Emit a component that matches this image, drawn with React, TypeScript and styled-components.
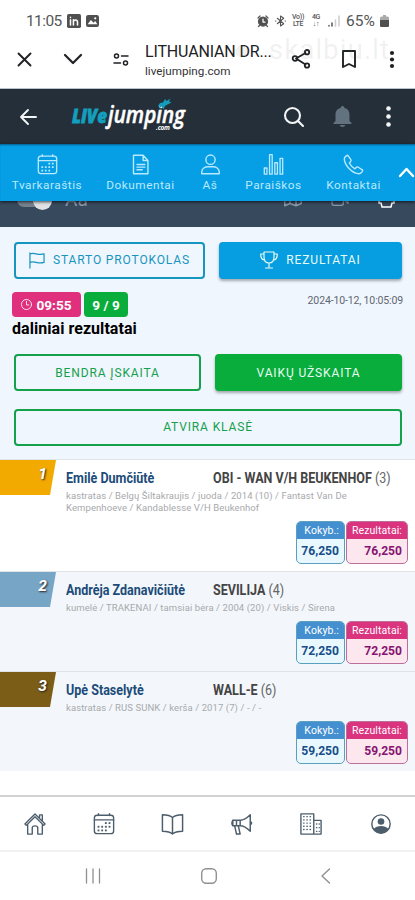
import React from 'react';
import styled, { createGlobalStyle } from 'styled-components';

const Global = createGlobalStyle`
  * { box-sizing: border-box; }
  body { margin: 0; background: #fff; font-family: Roboto, "Liberation Sans", sans-serif; }
  svg { display: block; flex: none; overflow: visible; }
`;

const Screen = styled.div`
  width: 415px;
  height: 900px;
  overflow: hidden;
  display: flex;
  flex-direction: column;
  background: #fff;
`;

const Squeeze = styled.span`
  display: inline-block;
  white-space: nowrap;
  transform: scaleX(0.808);
  transform-origin: left center;
`;

/* phone status bar */
const StatusBar = styled.div`
  height: 40px;
  flex: none;
  display: flex;
  align-items: center;
  padding: 1px 26px 0 26px;
  color: #555;
`;
const Clock = styled.div`
  width: 41px;
  font-size: 15.5px;
  letter-spacing: -0.6px;
`;
const StatusIcons = styled.div`
  display: flex;
  gap: 5px;
  flex: 1;
`;
const SignalGroup = styled.div`
  display: flex;
  align-items: center;
  gap: 6px;
`;
const TinyStack = styled.div`
  font-size: 7px;
  line-height: 7px;
  font-weight: 500;
  text-align: center;
  letter-spacing: -0.3px;
  width: 12px;
`;
const Percent = styled.div`
  font-size: 15.5px;
  width: 31px;
  letter-spacing: 0;
  margin-right: -3px;
`;

/* in-app browser bar */
const BrowserBar = styled.div`
  height: 49px;
  flex: none;
  position: relative;
  display: flex;
  align-items: center;
  padding: 0 20px 10px 17px;
  color: #202124;
  border-bottom: 1px solid #b9c3cd;
`;
const BarSlot = styled.div<{ $w: number }>`
  width: ${(p) => p.$w}px;
  flex: none;
`;
const PageInfo = styled.div`
  width: 146px;
  height: 39px;
  flex: none;
  white-space: nowrap;
`;
const PageTitle = styled.div`
  font-size: 16px;
  line-height: 19px;
  margin-top: 2px;
  letter-spacing: -0.15px;
`;
const PageHost = styled.div`
  font-size: 11.7px;
  line-height: 16px;
  margin-top: 2px;
  color: #333;
`;
const Watermark = styled.div`
  position: absolute;
  left: 233px;
  top: -8px;
  display: flex;
  gap: 18px;
  font-size: 28px;
  line-height: 36px;
  letter-spacing: 0.9px;
  color: rgba(110, 110, 110, 0.1);
  white-space: nowrap;
`;

/* site header */
const Header = styled.header`
  height: 55px;
  flex: none;
  display: flex;
  align-items: center;
  padding: 0 23px 0 20px;
  background: #242f39;
  color: #f3f5f7;
`;
const LogoBox = styled.div`
  margin-left: 35px;
  width: 212px;
`;
const HeaderActions = styled.div`
  display: flex;
  align-items: center;
`;

const MenuBar = styled.nav`
  height: 57px;
  flex: none;
  display: flex;
  position: relative;
  z-index: 1;
  background: #069ee5;
  color: #b9eaff;
  box-shadow: 0 1px 3px rgba(0, 0, 0, 0.7), inset 0 2px 2px -1px rgba(0, 40, 70, 0.55);
`;
const MenuItem = styled.div<{ $w: number }>`
  width: ${(p) => p.$w}px;
  flex: none;
  display: flex;
  flex-direction: column;
  align-items: center;
  padding-top: 10px;
  font-size: 11.8px;
  letter-spacing: 0.52px;
  line-height: 15px;
  gap: 3px;
  white-space: nowrap;
`;
const MenuToggle = styled.div`
  padding: 21px 0 0 2px;
  color: #fff;
`;

const ToolStrip = styled.div`
  height: 26px;
  flex: none;
  display: flex;
  overflow: hidden;
  background: #37495d;
  color: #8b98a5;
  padding: 0 20px 0 17px;
`;
const Switch = styled.div`
  width: 35px;
  height: 14px;
  margin-top: -8px;
  border-radius: 7px;
  background: #76828d;
  display: flex;
  justify-content: flex-end;
  align-items: center;
`;
const Knob = styled.div`
  width: 19px;
  height: 19px;
  flex: none;
  border-radius: 50%;
  background: #dfe3e6;
`;
const FontSizeLabel = styled.div`
  font-size: 19px;
  line-height: 20px;
  margin: -11px 0 0 13px;
  flex: 1;
`;
const StripIcons = styled.div`
  display: flex;
  gap: 28px;
  margin-top: -11px;
`;

/* filter panel */
const Panel = styled.section`
  height: 232px;
  flex: none;
  background: #f0f6fe;
  padding: 14.500px 13px 0 14px;
  display: flex;
  flex-direction: column;
`;
const ButtonRow = styled.div`
  display: flex;
  gap: 14px;
  & + & {
    margin-top: 17.500px;
  }
`;
const Button = styled.button<{ $tone: string; $solid?: boolean; $w: number }>`
  width: ${(p) => p.$w}px;
  height: 37px;
  padding: 0;
  display: flex;
  align-items: center;
  justify-content: center;
  gap: 8px;
  border: 2px solid ${(p) => p.$tone};
  border-radius: 4px;
  background: ${(p) => (p.$solid ? p.$tone : 'transparent')};
  color: ${(p) => (p.$solid ? '#e7fbf3' : p.$tone)};
  box-shadow: ${(p) => (p.$solid ? '0 2px 3px rgba(0,0,0,.32)' : 'none')};
  font-family: inherit;
  font-size: 12px;
  letter-spacing: 0.87px;
  white-space: nowrap;
`;
const InfoRow = styled.div`
  display: flex;
  align-items: flex-start;
  gap: 3px;
  margin: 13.500px -1px 0 -2px;
`;
const Badge = styled.div<{ $bg: string; $w: number }>`
  width: ${(p) => p.$w}px;
  height: 25px;
  border-radius: 4px;
  background: ${(p) => p.$bg};
  color: #fff;
  display: flex;
  align-items: center;
  justify-content: center;
  gap: 4px;
  font-size: 13.6px;
  font-weight: 700;
`;
const Stamp = styled.div`
  margin-left: auto;
  padding-top: 2px;
  font-size: 10.5px;
  line-height: 14px;
  letter-spacing: -0.14px;
  color: #5f6670;
`;
const Subtitle = styled.h2`
  margin: 2px 0 15px -2px;
  height: 20px;
  font-size: 16px;
  line-height: 20px;
  font-weight: 700;
  letter-spacing: 0.05px;
  color: #000;
`;

/* results */
const Row = styled.article<{ $h: number; $bg: string }>`
  height: ${(p) => p.$h}px;
  flex: none;
  display: flex;
  background: ${(p) => p.$bg};
  border-top: 1px solid #dfe4e9;
`;
const Place = styled.div<{ $bg: string }>`
  width: 56px;
  height: 35px;
  flex: none;
  clip-path: polygon(0 0, 100% 0, 50px 100%, 0 100%);
  background: ${(p) => p.$bg};
  color: #fff;
  font-size: 15.5px;
  line-height: 18px;
  font-style: italic;
  font-weight: 700;
  text-align: right;
  padding: 5px 9px 0 0;
  text-shadow: 1px 1px 2px #222;
`;
const Entry = styled.div`
  flex: 1;
  min-width: 0;
  padding: 9px 7px 7px 10px;
  display: flex;
  flex-direction: column;
`;
const Names = styled.div`
  display: grid;
  grid-template-columns: 147px 1fr;
  font-size: 15.5px;
  line-height: 18px;
  height: 18px;
`;
const Rider = styled.div`
  color: #204b78;
  font-weight: 700;
`;
const Horse = styled.div`
  color: #444;
  font-weight: 700;
`;
const StartNo = styled.span`
  font-weight: 400;
  color: #666;
`;
const Details = styled.div`
  margin-top: 3px;
  font-size: 9.500px;
  line-height: 12px;
  letter-spacing: 0.090px;
  color: #a7a9ac;
  white-space: nowrap;
`;
const Scores = styled.div`
  display: flex;
  justify-content: flex-end;
  gap: 1px;
  margin-top: auto;
`;
const Score = styled.div<{ $w: number; $head: string; $body: string; $ink: string; $line: string }>`
  width: ${(p) => p.$w}px;
  height: 43px;
  flex: none;
  overflow: hidden;
  border: 1px solid ${(p) => p.$line};
  border-radius: 5px;
  background: ${(p) => p.$body};
  color: ${(p) => p.$ink};
  text-align: right;
  font-size: 12.1px;
  font-weight: 700;
  line-height: 24px;
  padding-right: 5px;
`;
const ScoreLabel = styled.div<{ $bg: string }>`
  margin-right: -5px;
  padding-right: 5px;
  height: 17px;
  background: ${(p) => p.$bg};
  color: #fff;
  font-size: 10.5px;
  line-height: 17px;
  font-weight: 400;
  letter-spacing: 0.1px;
`;

const Spacer = styled.div`
  flex: 1;
`;
const TabBar = styled.nav`
  height: 57px;
  flex: none;
  display: grid;
  grid-template-columns: repeat(6, 69.2px);
  align-items: center;
  justify-items: center;
  border-top: 2px solid #cfd1d3;
  border-bottom: 2px solid #f0f1f2;
  color: #4c5d6c;
`;
const SystemBar = styled.div`
  height: 48px;
  flex: none;
  display: flex;
  align-items: center;
  color: #909090;
  padding-left: 85px;
`;
const SystemSlot = styled.div<{ $w: number }>`
  width: ${(p) => p.$w}px;
`;

type IconProps = { w: number; h?: number; box?: string; sw?: number; children: React.ReactNode };
const Icon = ({ w, h = w, box = '0 0 24 24', sw = 1.5, children }: IconProps) => (
  <svg width={w} height={h} viewBox={box} fill="none" stroke="currentColor" strokeWidth={sw} strokeLinecap="round" strokeLinejoin="round">
    {children}
  </svg>
);

const dots = [[14, 11], [18, 11], [6, 15], [10, 15], [14, 15], [18, 15], [6, 19], [10, 19], [14, 19]];
const Calendar = ({ w }: { w: number }) => (
  <Icon w={w} sw={1.5}>
    <rect x="1.5" y="2.5" width="21" height="20" rx="3" />
    <path d="M1.5 7.5h21M6 .8v2M18 .8v2" />
    {dots.map(([x, y]) => <rect key={`${x}-${y}`} x={x - 1} y={y - 1} width="2" height="2" fill="currentColor" stroke="none" />)}
  </Icon>
);

const Logo = () => (
  <svg width="116" height="38" viewBox="0 0 116 38" fontFamily="'Open Sans', sans-serif" fontStyle="italic">
    <text x="0" y="25" fontSize="20" fontWeight="800" fill="#139fbe" stroke="#139fbe" strokeWidth=".8" textLength="35" lengthAdjust="spacingAndGlyphs">LIVe</text>
    <text x="36" y="25" fontSize="23.500" fontWeight="600" fill="#fff" stroke="#fff" strokeWidth=".5" textLength="77" lengthAdjust="spacingAndGlyphs">jumping</text>
    <text x="84" y="32" fontSize="6.500" fontWeight="700" fill="#fff" textLength="14">.com</text>
    <path d="M85.500 8.500 88 5l3-.5 2-3.500 1.500 2L98.500.500 97 3.500l2.500 1-4 2-2.500 1.500-1.500 3.500-1.500-3L87 10.500l1-3z" fill="#159cba" />
  </svg>
);

const menu = [
  { w: 94, label: 'Tvarkaraštis', icon: <Calendar w={21} /> },
  { w: 93, label: 'Dokumentai', icon: <Icon w={21} sw={1.6}><path d="M4 1.5h11l5.5 6v15H4zM15 1.5v6h5.5M8 12h9M8 15h9M8 18h6" /></Icon> },
  { w: 46, label: 'Aš', icon: <Icon w={21} sw={1.6}><circle cx="12" cy="6.5" r="5.3" /><path d="M2 22.5v-2c0-4 4-6 7-6h6c3 0 7 2 7 6v2z" /></Icon> },
  { w: 81, label: 'Paraiškos', icon: <Icon w={21} sw={1.5}><path d="M1.5 16h3v7h-3zM7.5 .8h3V23h-3zM13.5 10h3v13h-3zM19.5 5h3v18h-3z" /></Icon> },
  { w: 79, label: 'Kontaktai', icon: <Icon w={21} sw={1.6}><path d="M5.5 1.5 9 6.5c.5 1 .3 1.7-.4 2.4L7.2 10.3c1.6 3 3.5 5 6.5 6.6l1.4-1.4c.7-.7 1.5-.8 2.4-.4l5 3.4c.3 1-2 4-4 4C11 22.5 1.5 13 1.5 5.5c0-2 3-4 4-4z" /></Icon> },
];

const results = [
  { place: 1, h: 112, bg: '#ffffff', tag: '#f2a900', rider: 'Emilė Dumčiūtė', horse: 'OBI - WAN V/H BEUKENHOF', no: 3, score: '76,250', details: ['kastratas / Belgų Šiltakraujis / juoda / 2014 (10) / Fantast Van De', 'Kempenhoeve / Kandablesse V/H Beukenhof'] },
  { place: 2, h: 100, bg: '#f3f7fb', tag: '#77a5c5', rider: 'Andrėja Zdanavičiūtė', horse: 'SEVILIJA', no: 4, score: '72,250', details: ['kumelė / TRAKENAI / tamsiai bėra / 2004 (20) / Viskis / Sirena'] },
  { place: 3, h: 100, bg: '#f3f7fb', tag: '#7b5d17', rider: 'Upė Staselytė', horse: 'WALL-E', no: 6, score: '59,250', details: ['kastratas / RUS SUNK / kerša / 2017 (7) / - / -'] },
];

const windows = [5, 8.5, 12].flatMap((x) => [4, 7.5, 11, 14.5, 18].map((y) => [x, y]));

export default function App() {
  return (
    <Screen>
      <Global />
      <StatusBar>
        <Clock>11:05</Clock>
        <StatusIcons>
          <Icon w={14}><rect width="24" height="24" rx="3" fill="#505050" stroke="none" /><path d="M6 10v9M11 10v9M11 14c0-5 7-5 7 0v5M6 5.5v.5" stroke="#fff" strokeWidth="2.6" /></Icon>
          <Icon w={13} h={14}><rect y="1" width="24" height="22" rx="4" fill="#505050" stroke="none" /><path d="m3 18 6-8 5 5 3-3 4 6z" fill="#fff" stroke="none" /><circle cx="17" cy="7" r="2" fill="#fff" stroke="none" /></Icon>
        </StatusIcons>
        <SignalGroup>
          <Icon w={12} sw={2.5}><circle cx="12" cy="13" r="9" fill="#505050" /><path d="M2 6 6 2M22 6l-4-4M5 21l-2 2M19 21l2 2" /><path d="M12 8v6h4" stroke="#fff" /></Icon>
          <Icon w={11} h={14} sw={2.4}><path d="m5 6 14 12-7 5V1l7 5L5 18M1 12h1M22 12h1" /></Icon>
          <TinyStack>Vo)) LTE</TinyStack>
          <TinyStack>4G<br />↓↑</TinyStack>
          <Icon w={12} h={12} box="0 0 12 12" sw={1.5}><path d="M1 10.5v.5M4 8v3" /><path d="M7.5 5v6M11 1v10" stroke="#ccc" /></Icon>
          <Percent>65%</Percent>
          <Icon w={9} h={12} box="0 0 9 12"><rect x="3" width="3" height="3" fill="#aaa" stroke="none" /><rect y="1.5" width="9" height="10.5" rx="1.5" fill="#aaa" stroke="none" /><path d="M0 5h9v5.5q0 1.5-1.5 1.5h-6Q0 12 0 10.5z" fill="#505050" stroke="none" /></Icon>
        </SignalGroup>
      </StatusBar>

      <BrowserBar>
        <Watermark><span>●</span><span>skalbiu.lt</span></Watermark>
        <BarSlot $w={47}><Icon w={15} box="0 0 15 15" sw={1.9}><path d="m1.5 1.5 12 12M13.5 1.5l-12 12" /></Icon></BarSlot>
        <BarSlot $w={49}><Icon w={18} h={10} box="0 0 18 10" sw={2.2}><path d="m1 1 8 8 8-8" /></Icon></BarSlot>
        <BarSlot $w={32}><Icon w={16} h={13} box="0 0 16 13" sw={1.5}><circle cx="3.5" cy="3" r="2" /><path d="M8.5 3H15M1 10h6.5" /><circle cx="12.5" cy="10" r="2" /></Icon></BarSlot>
        <PageInfo>
          <PageTitle>LITHUANIAN DR...</PageTitle>
          <PageHost>livejumping.com</PageHost>
        </PageInfo>
        <BarSlot $w={51}><Icon w={20} h={20} box="0 0 20 20" sw={1.8}><path d="M14.5 4 5 9.5l9.5 6" /><circle cx="4" cy="9.5" r="2.3" /><circle cx="16" cy="3.2" r="2.2" /><circle cx="16" cy="16.5" r="2.2" /></Icon></BarSlot>
        <BarSlot $w={48}><Icon w={14} h={18} box="0 0 14 18" sw={1.9}><path d="M1 1h12v16l-6-3-6 3z" /></Icon></BarSlot>
        <Icon w={4} h={17} box="0 0 4 17"><g fill="currentColor" stroke="none"><circle cx="2" cy="2" r="2.1" /><circle cx="2" cy="8.5" r="2.1" /><circle cx="2" cy="15" r="2.1" /></g></Icon>
      </BrowserBar>

      <Header>
        <Icon w={17} h={16} box="0 0 17 16" sw={1.9}><path d="M16 8H1M8 1 1 8l7 7" /></Icon>
        <LogoBox><Logo /></LogoBox>
        <HeaderActions>
          <BarSlot $w={49}><Icon w={20} h={20} box="0 0 20 20" sw={2.1}><circle cx="8.5" cy="8.5" r="7.5" /><path d="m14 14 5 5" /></Icon></BarSlot>
          <BarSlot $w={53}><Icon w={19} h={21} box="0 0 19 21"><path d="M9.5 0q2 0 2 2c4 1 5 4 5 7v6l2 2v1H.5v-1l2-2V9c0-3 1-6 5-7q0-2 2-2zM6.5 19h6q-1 2-3 2t-3-2z" fill="#63727f" stroke="none" /></Icon></BarSlot>
          <Icon w={5} h={21} box="0 0 5 21"><g fill="currentColor" stroke="none"><circle cx="2.5" cy="2.5" r="2.3" /><circle cx="2.5" cy="10.5" r="2.3" /><circle cx="2.5" cy="18.5" r="2.3" /></g></Icon>
        </HeaderActions>
      </Header>

      <MenuBar>
        {menu.map((m) => <MenuItem key={m.label} $w={m.w}>{m.icon}{m.label}</MenuItem>)}
        <MenuToggle><Icon w={22} h={14} box="-4 -2 22 14" sw={2.4}><path d="m1 9 6.5-7L14 9" /></Icon></MenuToggle>
      </MenuBar>

      <ToolStrip>
        <Switch><Knob /></Switch>
        <FontSizeLabel>Aa</FontSizeLabel>
        <StripIcons>
          <Icon w={18} sw={2}><path d="M1 4v17l7-3 8 3 7-3V1l-7 3-8-3zM8 1v17M16 4v17" /></Icon>
          <Icon w={20} h={16} sw={2}><rect x="0" y="3" width="17" height="20" rx="3" /><path d="m17 14 7 6V8" /></Icon>
          <svg width="17" height="17" viewBox="0 0 17 17" fill="none" stroke="#fff" strokeWidth="1.5"><path d="M1 8v5h2l1 4h9l1-4h2V8z" /></svg>
        </StripIcons>
      </ToolStrip>

      <Panel>
        <ButtonRow>
          <Button $tone="#1695be" $w={191}>
            <Icon w={16} h={17} box="0 0 17 18" sw={1.3}><path d="M1 1v16M1 2c5-2 8 2 15 0v9c-7 2-10-2-15 0" /></Icon>STARTO PROTOKOLAS
          </Button>
          <Button $tone="#069de1" $solid $w={183}>
            <Icon w={18} h={18} box="0 0 18 18" sw={1.2}><path d="M4 1h10v5c0 4-2 6-5 6S4 10 4 6zM4 3H.7c0 4 1 6 4 6M14 3h3.3c0 4-1 6-4 6M9 12v4M5.5 17h7" /></Icon>REZULTATAI
          </Button>
        </ButtonRow>
        <InfoRow>
          <Badge $bg="#e02f7c" $w={69}><Icon w={11} sw={1.8}><circle cx="12" cy="12" r="11" /><path d="M12 5v8h5" /></Icon>09:55</Badge>
          <Badge $bg="#08ad3b" $w={44}>9 / 9</Badge>
          <Stamp>2024-10-12, 10:05:09</Stamp>
        </InfoRow>
        <Subtitle>daliniai rezultatai</Subtitle>
        <ButtonRow>
          <Button $tone="#15a04b" $w={187}>BENDRA ĮSKAITA</Button>
          <Button $tone="#08ad3b" $solid $w={187}>VAIKŲ UŽSKAITA</Button>
        </ButtonRow>
        <ButtonRow>
          <Button $tone="#15a04b" $w={388}>ATVIRA KLASĖ</Button>
        </ButtonRow>
      </Panel>

      {results.map((r) => (
        <Row key={r.place} $h={r.h} $bg={r.bg}>
          <Place $bg={r.tag}>{r.place}</Place>
          <Entry>
            <Names>
              <Rider><Squeeze>{r.rider}</Squeeze></Rider>
              <Horse><Squeeze>{r.horse} <StartNo>({r.no})</StartNo></Squeeze></Horse>
            </Names>
            <Details>{r.details.map((d) => <div key={d}>{d}</div>)}</Details>
            <Scores>
              <Score $w={49} $head="#438fd0" $body="#e9f8ff" $ink="#174d88" $line="#5a9fbd"><ScoreLabel $bg="#438fd0">Kokyb.:</ScoreLabel>{r.score}</Score>
              <Score $w={62} $head="#db347f" $body="#fde7ee" $ink="#861472" $line="#bd6f9c"><ScoreLabel $bg="#db347f">Rezultatai:</ScoreLabel>{r.score}</Score>
            </Scores>
          </Entry>
        </Row>
      ))}
      <Spacer />

      <TabBar>
        <Icon w={22} sw={1.5}><path d="M1 12 12 1l11 11-1.5 1.5L12 4 2.5 13.5zM4 12v11h5v-7q0-2 3-2t3 2v7h5V12M17 5V2h3v7" /></Icon>
        <Calendar w={22} />
        <Icon w={23} h={22} sw={1.6}><path d="M12 5C9 2 5 2 1 2v18c4 0 8 0 11 3 3-3 7-3 11-3V2c-4 0-8 0-11 3zv18" /></Icon>
        <Icon w={22} sw={1.6}><path d="M2 8h8c5 0 8-3 11-6v18c-3-3-6-6-11-6H2zM10 8v6M4 14l2 9h4l-2-9M21 9q3 2 0 4M2 8q-2 3 0 6M6 8v6" /></Icon>
        <Icon w={22} sw={1.5}><path d="M1 1h14v22H1zM15 8h8v15h-8" />{windows.map(([x, y]) => <path key={`${x}-${y}`} d={`M${x - 1} ${y}h.4`} />)}<path d="M18 12h.4M21 12h.1M18 16h.4M21 16h.1M18 20h.4M21 20h.1" /></Icon>
        <Icon w={20} sw={1.7}><circle cx="12" cy="12" r="11" /><circle cx="12" cy="9" r="4" fill="currentColor" stroke="none" /><path d="M3 18c4-5 14-5 18 0-4 7-14 7-18 0z" fill="currentColor" stroke="none" /></Icon>
      </TabBar>
      <SystemBar>
        <SystemSlot $w={116}><Icon w={16} h={16} box="0 0 16 16" sw={1.3}><path d="M1.5 1v14M8 1v14M14.5 1v14" /></Icon></SystemSlot>
        <SystemSlot $w={120}><Icon w={16} h={16} box="0 0 16 16" sw={1.4}><rect x=".7" y=".7" width="14.6" height="14.6" rx="4.5" /></Icon></SystemSlot>
        <Icon w={9} h={16} box="0 0 9 16" sw={1.4}><path d="M8.5 1 1 8l7.5 7" /></Icon>
      </SystemBar>
    </Screen>
  );
}
